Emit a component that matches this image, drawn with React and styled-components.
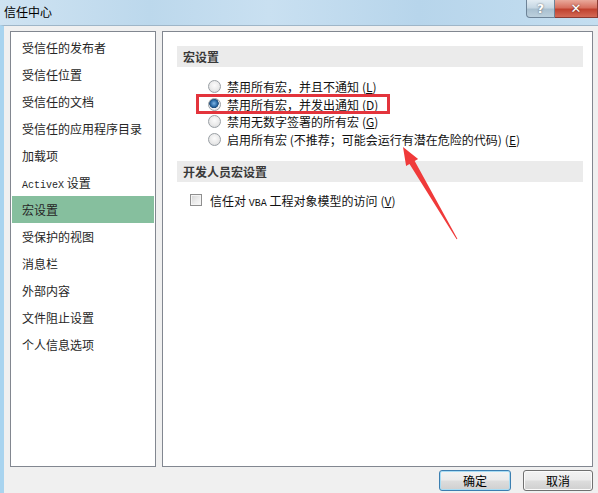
import * as React from 'react';
import styled, { createGlobalStyle, css } from 'styled-components';

const CJK_FONT = `"Noto Sans CJK SC", "Noto Sans", sans-serif`;
const MONO_FONT = `"Liberation Mono", "DejaVu Sans Mono", monospace`;
const TEXT_COLOR = '#1e1e1e';
const PANEL_BORDER = '#828790';
const FRAME_BLUE = '#a9d4ef';

const GlobalStyle = createGlobalStyle`
	html, body {
		margin: 0;
		padding: 0;
		background: #f0f0f0;
	}
	body {
		font-family: ${CJK_FONT};
		font-size: 12px;
		color: ${TEXT_COLOR};
	}
`;

/* окно целиком */
const Window = styled.div`
	position: relative;
	display: flex;
	flex-direction: column;
	width: 598px;
	height: 493px;
	overflow: hidden;
`;

const TitleBar = styled.div`
	display: flex;
	align-items: flex-start;
	justify-content: space-between;
	height: 25px;
	flex-shrink: 0;
	background: linear-gradient(
		to right,
		#cfe3f2 0%,
		#bcd8ec 25%,
		#c9e0f1 45%,
		#b7d5eb 70%,
		#c4def0 100%
	);
`;

const Title = styled.div`
	padding: 4px 0 0 4px;
	font-size: 12px;
	line-height: 16px;
	color: #000;
`;

const CaptionButtons = styled.div`
	display: flex;
	height: 18px;
`;

const CaptionButton = styled.div`
	display: flex;
	align-items: center;
	justify-content: center;
	height: 18px;
	box-sizing: border-box;
	border: 1px solid #6d8397;
	border-top: none;
	font-family: "DejaVu Sans", sans-serif;
	font-weight: 700;
	color: #fff;
	text-shadow: 0 0 2px rgba(0, 0, 0, 0.6);
	${({ $kind }) =>
		$kind === 'close'
			? css`
					width: 43px;
					border-color: #8a3a32;
					border-left: none;
					font-size: 13px;
					background: linear-gradient(to bottom, #e9a99b 0%, #d7705f 45%, #c0422f 55%, #d46a56 100%);
			  `
			: css`
					width: 29px;
					border-bottom-left-radius: 4px;
					font-size: 12px;
					background: linear-gradient(to bottom, #e2ecf3 0%, #c6d7e3 45%, #a9c0d0 55%, #bcd0dd 100%);
			  `}
`;

const Body = styled.div`
	display: flex;
	flex-direction: column;
	flex: 1;
	border-left: 4px solid ${FRAME_BLUE};
	border-top: 1px solid #9fb6c8;
	background: #f0f0f0;
	padding: 5px 0 0 6px;
`;

const Panels = styled.div`
	display: flex;
	gap: 6px;
	height: 436px;
`;

const Panel = styled.div`
	box-sizing: border-box;
	height: 100%;
	border: 1px solid ${PANEL_BORDER};
	background: #fff;
	width: ${({ $width }) => $width}px;
`;

const NavList = styled.div`
	display: flex;
	flex-direction: column;
	padding: 2px 1px 0 1px;
`;

const NavItem = styled.div`
	height: 27px;
	line-height: 27px;
	padding-left: 10px;
	white-space: nowrap;
	color: #262626;
	background: ${({ $active }) => ($active ? '#86bf9e' : 'transparent')};
`;

const Mono = styled.span`
	font-family: ${MONO_FONT};
	font-size: 10px;
`;

const SettingsBody = styled.div`
	display: flex;
	flex-direction: column;
	padding: 14px 9px 0 14px;
`;

const SectionHeader = styled.div`
	height: 21px;
	line-height: 21px;
	padding-left: 6px;
	margin-top: ${({ $offset }) => $offset || 0}px;
	background: #ebebeb;
	font-weight: 700;
	color: #3a3a3a;
`;

const OptionList = styled.div`
	display: flex;
	flex-direction: column;
	padding: 11px 0 0 31px;
`;

const OptionRow = styled.div`
	position: relative;
	display: flex;
	align-items: center;
	gap: 6px;
	height: 17.5px;
	white-space: nowrap;
	color: #111;

	${({ $marked }) =>
		$marked &&
		css`
			&::after {
				content: '';
				position: absolute;
				left: -12px;
				top: -1.5px;
				width: 194px;
				height: 20px;
				box-sizing: border-box;
				border: 3px solid #e3343c;
			}
		`}
`;

const Radio = styled.span`
	display: inline-block;
	width: 13px;
	height: 13px;
	flex-shrink: 0;
	box-sizing: border-box;
	border-radius: 50%;
	border: 1px solid #9a9fa4;
	background: ${({ $checked }) =>
		$checked
			? 'radial-gradient(circle at 45% 40%, #7fb6e6 0%, #2d6ca8 35%, #1c4a78 50%, #eef1f4 56%, #dfe3e7 100%)'
			: 'radial-gradient(circle at 50% 40%, #fbfbfb 0%, #eaeaea 55%, #cfd2d5 100%)'};
`;

const Shortcut = styled.span`
	margin-left: 3px;

	u {
		text-decoration: underline;
	}
`;

const CheckRow = styled.div`
	display: flex;
	align-items: center;
	gap: 8px;
	height: 18px;
	margin: 9px 0 0 13px;
	white-space: nowrap;
	color: #111;
`;

const Checkbox = styled.span`
	display: inline-block;
	width: 12px;
	height: 12px;
	flex-shrink: 0;
	box-sizing: border-box;
	border: 1px solid #8f8f8f;
	background: linear-gradient(135deg, #d3d3d3 0%, #eeeeee 60%, #fafafa 100%);
	box-shadow: inset 0 0 0 1px #f4f4f4;
`;

const Footer = styled.div`
	display: flex;
	justify-content: flex-end;
	gap: 12px;
	padding: 3px 5px 0 0;
`;

const DialogButton = styled.div`
	display: flex;
	align-items: center;
	justify-content: center;
	box-sizing: border-box;
	width: ${({ $width }) => $width}px;
	height: 21px;
	border-radius: 3px;
	border: 1px solid ${({ $default }) => ($default ? '#3c7fb1' : '#707070')};
	background: linear-gradient(to bottom, #f3f3f3 0%, #ebebeb 48%, #dddddd 52%, #cfcfcf 100%);
	box-shadow: inset 0 0 0 1px ${({ $default }) => ($default ? '#a8dcf4' : '#fbfbfb')};
	color: #000;
	font-size: 12px;
`;

const ArrowMark = styled.svg`
	position: absolute;
	left: 395px;
	top: 140px;
	width: 70px;
	height: 105px;
	pointer-events: none;
`;

const NAV_ITEMS = [
	'受信任的发布者',
	'受信任位置',
	'受信任的文档',
	'受信任的应用程序目录',
	'加载项',
	'ActiveX',
	'宏设置',
	'受保护的视图',
	'消息栏',
	'外部内容',
	'文件阻止设置',
	'个人信息选项',
];

const MACRO_OPTIONS = [
	{ label: '禁用所有宏，并且不通知', key: 'L' },
	{ label: '禁用所有宏，并发出通知', key: 'D', checked: true, marked: true },
	{ label: '禁用无数字签署的所有宏', key: 'G' },
	{ label: '启用所有宏 (不推荐；可能会运行有潜在危险的代码)', key: 'E' },
];

function renderNavLabel(label) {
	if (label === 'ActiveX') {
		return (
			<>
				<Mono>ActiveX</Mono> 设置
			</>
		);
	}
	return label;
}

export default function App() {
	return (
		<>
			<GlobalStyle />
			<Window>
				<TitleBar>
					<Title>信任中心</Title>
					<CaptionButtons>
						<CaptionButton $kind="help">?</CaptionButton>
						<CaptionButton $kind="close">✕</CaptionButton>
					</CaptionButtons>
				</TitleBar>
				<Body>
					<Panels>
						<Panel $width={146}>
							<NavList>
								{NAV_ITEMS.map((item) => (
									<NavItem key={item} $active={item === '宏设置'}>
										{renderNavLabel(item)}
									</NavItem>
								))}
							</NavList>
						</Panel>
						<Panel $width={431}>
							<SettingsBody>
								<SectionHeader>宏设置</SectionHeader>
								<OptionList>
									{MACRO_OPTIONS.map((option) => (
										<OptionRow key={option.key} $marked={option.marked}>
											<Radio $checked={option.checked} />
											<span>
												{option.label}
												<Shortcut>
													(<u>{option.key}</u>)
												</Shortcut>
											</span>
										</OptionRow>
									))}
								</OptionList>
								<SectionHeader $offset={13}>开发人员宏设置</SectionHeader>
								<CheckRow>
									<Checkbox />
									<span>
										信任对 <Mono>VBA</Mono> 工程对象模型的访问
										<Shortcut>
											(<u>V</u>)
										</Shortcut>
									</span>
								</CheckRow>
							</SettingsBody>
						</Panel>
					</Panels>
					<Footer>
						<DialogButton $width={72} $default>
							确定
						</DialogButton>
						<DialogButton $width={70}>取消</DialogButton>
					</Footer>
				</Body>
				<ArrowMark viewBox="0 0 70 105">
					<polygon
						points="8,7 23.1,19 19.7,21 62.4,98.8 61.6,99.2 14.5,24 11.1,26"
						fill="#f03a3a"
					/>
				</ArrowMark>
			</Window>
		</>
	);
}
